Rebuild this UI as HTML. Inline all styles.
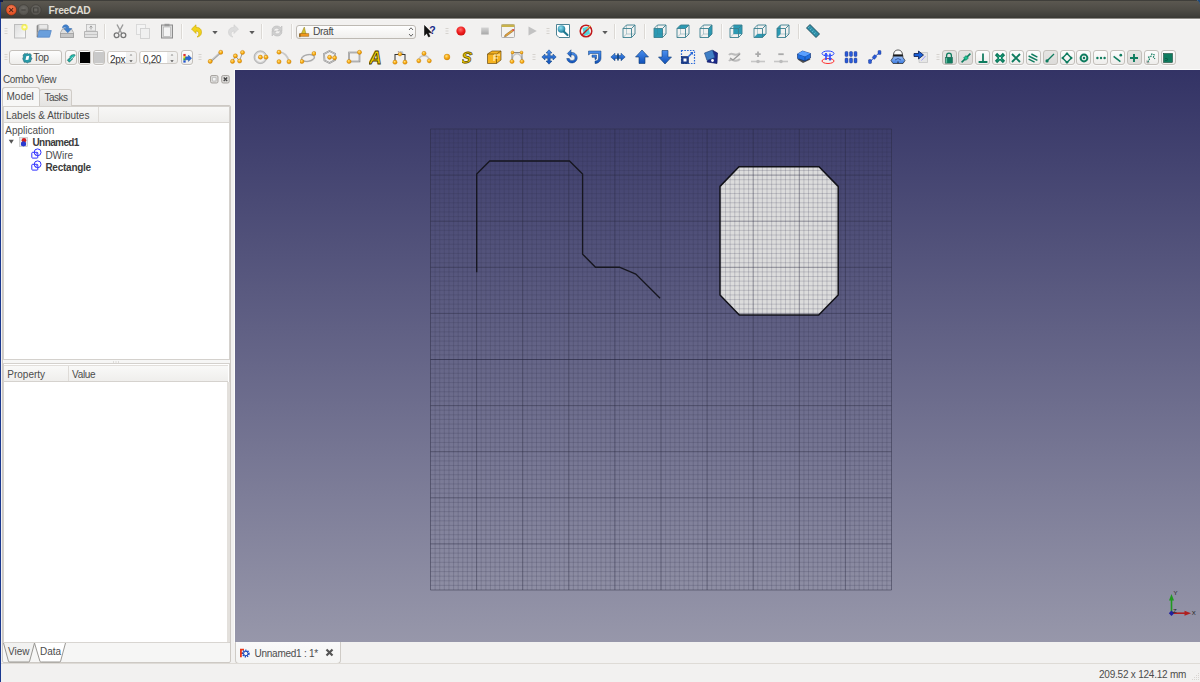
<!DOCTYPE html><html><head><meta charset="utf-8"><style>
html,body{margin:0;padding:0;}
body{width:1200px;height:682px;overflow:hidden;position:relative;background:#f2f1f0;font-family:"Liberation Sans", sans-serif;}
.t{position:absolute;white-space:nowrap;line-height:1;}
</style></head><body>
<div style="position:absolute;left:0px;top:0px;width:1200px;height:18px;background:linear-gradient(#5d5a51 0px,#58554e 3px,#4d4b45 10px,#42413c 15px,#3a3935 18px);border-radius:4px 4px 0 0;"></div>
<div style="position:absolute;left:0px;top:18px;width:1200px;height:1px;background:#8d8b86;"></div>
<div style="position:absolute;left:3px;top:0px;width:1194px;height:1px;background:#3f3e3a;"></div>
<svg style="position:absolute;left:1196px;top:0px" width="4" height="5" viewBox="0 0 4 5"><path d="M0 0H4V5Q3.5 0.5 0 0Z" fill="#1a4a80"/></svg>
<div style="position:absolute;left:0px;top:19px;width:1200px;height:1px;background:#f8f7f6;"></div>
<svg style="position:absolute;left:0;top:0" width="60" height="19"><defs><radialGradient id="cg" cx="50%" cy="35%" r="60%"><stop offset="0" stop-color="#f57d55"/><stop offset="1" stop-color="#de4a1d"/></radialGradient><radialGradient id="gg" cx="50%" cy="35%" r="60%"><stop offset="0" stop-color="#6c6a65"/><stop offset="1" stop-color="#55534e"/></radialGradient></defs><circle cx="11.3" cy="10" r="5.4" fill="url(#cg)" stroke="#3a2a22" stroke-width="0.5"/><path d="M9.3 8.1L13.1 11.9M13.1 8.1L9.3 11.9" stroke="#5a2616" stroke-width="1.1"/><circle cx="23.6" cy="10" r="5.3" fill="url(#gg)" stroke="#3a3935" stroke-width="0.5"/><path d="M21.3 10H25.7" stroke="#3e3d39" stroke-width="1"/><circle cx="35.9" cy="10" r="5.3" fill="url(#gg)" stroke="#3a3935" stroke-width="0.5"/><rect x="33.6" y="7.9" width="4.4" height="4.2" fill="none" stroke="#3e3d39" stroke-width="0.9"/></svg>
<div class="t" style="left:48.5px;top:6.28px;font-size:10.3px;color:#dfdbd2;font-weight:bold;letter-spacing:-0.3px;">FreeCAD</div>
<div style="position:absolute;left:0px;top:2px;width:1px;height:680px;background:#1b3990;"></div>
<div style="position:absolute;left:0px;top:0px;width:3px;height:2px;background:#101c48;"></div>
<svg width="0" height="0" style="position:absolute"><defs><radialGradient id="dotg" cx="40%" cy="35%" r="65%"><stop offset="0" stop-color="#ffe28a"/><stop offset="0.5" stop-color="#fbb21a"/><stop offset="1" stop-color="#e08a00"/></radialGradient><radialGradient id="redg" cx="45%" cy="35%" r="65%"><stop offset="0" stop-color="#ff6a6a"/><stop offset="0.6" stop-color="#ee1c1c"/><stop offset="1" stop-color="#cc1010"/></radialGradient><radialGradient id="blueballg" cx="40%" cy="35%" r="65%"><stop offset="0" stop-color="#8fe0f0"/><stop offset="1" stop-color="#1a7a9a"/></radialGradient><linearGradient id="stopg" x1="0" y1="0" x2="0" y2="1"><stop offset="0" stop-color="#d4d4d4"/><stop offset="1" stop-color="#a8a8a8"/></linearGradient><linearGradient id="pageg" x1="0" y1="0" x2="1" y2="1"><stop offset="0" stop-color="#dcdcdc"/><stop offset="1" stop-color="#fafafa"/></linearGradient><linearGradient id="arrowg" x1="0" y1="0" x2="0" y2="1"><stop offset="0" stop-color="#4a90f0"/><stop offset="1" stop-color="#1050b8"/></linearGradient><linearGradient id="troopg" x1="0" y1="0" x2="0" y2="1"><stop offset="0" stop-color="#a8c8f8"/><stop offset="1" stop-color="#3a7ae0"/></linearGradient></defs></svg>
<svg style="position:absolute;left:-2.5px;top:23.3px" width="16" height="16" viewBox="0 0 16 16"><path d="M6.5 5.5h3M6.5 8h3M6.5 10.5h3" stroke="#d6d3cf" stroke-width="1"/></svg>
<svg style="position:absolute;left:12.5px;top:23.3px" width="16" height="16" viewBox="0 0 16 16"><rect x="1.5" y="1.5" width="11" height="13.5" fill="url(#pageg)" stroke="#bdbdbd" stroke-width="1"/><circle cx="11.5" cy="4.2" r="3.2" fill="#f7f24a" opacity="0.85"/><circle cx="11.5" cy="4.2" r="1.4" fill="#fffbd0"/></svg>
<svg style="position:absolute;left:36.0px;top:23.3px" width="16" height="16" viewBox="0 0 16 16"><path d="M1.5 2H12V9H1.5Z" fill="#bdbdbd" stroke="#9a9a9a" stroke-width="0.7"/><path d="M3 1.5H11.5V6H3Z" fill="#e8e8e8" stroke="#b5b5b5" stroke-width="0.6"/><path d="M1.2 14.2L3.2 7.5H15.3L13.5 14.2Z" fill="#6a9fdc" stroke="#4f83c4" stroke-width="0.7"/><path d="M1.2 2.5V14" stroke="#7a7a7a" stroke-width="1"/></svg>
<svg style="position:absolute;left:59.0px;top:23.3px" width="16" height="16" viewBox="0 0 16 16"><path d="M1.5 9.5L3.5 6H12.5L14.5 9.5V14.5H1.5Z" fill="#dedede" stroke="#a8a8a8" stroke-width="0.9"/><rect x="1.5" y="10.5" width="13" height="4" fill="#c6c6c6" stroke="#9e9e9e" stroke-width="0.8"/><path d="M3.5 5C3.5 1.5 8 0.5 9.8 3.8V5.5H12.8L8.8 9.8L4.8 5.5H7.5C7 4 5 3.8 3.5 5Z" fill="#3f80cc" stroke="#3a6fb0" stroke-width="0.5"/></svg>
<svg style="position:absolute;left:82.5px;top:23.3px" width="16" height="16" viewBox="0 0 16 16"><rect x="3.5" y="1.5" width="9" height="6.5" fill="#ececec" stroke="#b8b8b8" stroke-width="0.8"/><path d="M8 2.8V6.5M6.6 4.5L8 3L9.4 4.5" stroke="#a0a0a0" stroke-width="1" fill="none"/><path d="M1.5 8.5H14.5V14.5H1.5Z" fill="#e2e2e2" stroke="#b0b0b0" stroke-width="0.9"/><path d="M2 11.5H14" stroke="#c5c5c5" stroke-width="1"/></svg>
<div style="position:absolute;left:104px;top:24px;width:1px;height:15px;background:#dcd9d5;"></div>
<div style="position:absolute;left:105px;top:24px;width:1px;height:15px;background:#fbfbfa;"></div>
<svg style="position:absolute;left:112.0px;top:23.3px" width="16" height="16" viewBox="0 0 16 16"><path d="M5 1.5L9.5 10M11 1.5L6.5 10" stroke="#9a9a9a" stroke-width="1.4"/><circle cx="4.6" cy="12.3" r="2.4" fill="none" stroke="#777" stroke-width="1.3"/><circle cx="11.4" cy="12.3" r="2.4" fill="none" stroke="#777" stroke-width="1.3"/></svg>
<svg style="position:absolute;left:135.0px;top:23.3px" width="16" height="16" viewBox="0 0 16 16"><rect x="1.5" y="1.5" width="9" height="10" fill="#f4f4f4" stroke="#d8d8d8" stroke-width="0.9"/><rect x="5.5" y="5.5" width="9" height="10" fill="#f0f0f0" stroke="#d0d0d0" stroke-width="0.9"/></svg>
<svg style="position:absolute;left:158.7px;top:23.3px" width="16" height="16" viewBox="0 0 16 16"><rect x="2.5" y="2" width="11" height="13" fill="#dadada" stroke="#8c8c8c" stroke-width="1"/><rect x="4.5" y="4" width="7" height="9.5" fill="#f4f4f4" stroke="#aaa" stroke-width="0.6"/><rect x="5.5" y="0.8" width="5" height="2.4" fill="#999"/></svg>
<div style="position:absolute;left:181px;top:24px;width:1px;height:15px;background:#dcd9d5;"></div>
<div style="position:absolute;left:182px;top:24px;width:1px;height:15px;background:#fbfbfa;"></div>
<svg style="position:absolute;left:188.5px;top:23.3px" width="16" height="16" viewBox="0 0 16 16"><path d="M2.5 6L7 1.8V4.3C11.5 4.3 13.5 7.5 12 11.5C11.2 13 9.5 14 8 14C10.5 12.5 10.5 8 7 8V10.5Z" fill="#f1d31c" stroke="#c9a400" stroke-width="0.6"/></svg>
<svg style="position:absolute;left:207px;top:23.3px" width="16" height="16" viewBox="0 0 16 16"><path d="M5.3 8h5.4l-2.7 3.2z" fill="#5a5a5a"/></svg>
<svg style="position:absolute;left:225.2px;top:23.3px" width="16" height="16" viewBox="0 0 16 16"><path d="M13.5 6L9 1.8V4.3C4.5 4.3 2.5 7.5 4 11.5C4.8 13 6.5 14 8 14C5.5 12.5 5.5 8 9 8V10.5Z" fill="#dcdcdc" stroke="#cfcfcf" stroke-width="0.6"/></svg>
<svg style="position:absolute;left:243.7px;top:23.3px" width="16" height="16" viewBox="0 0 16 16"><path d="M5.3 8h5.4l-2.7 3.2z" fill="#5a5a5a"/></svg>
<div style="position:absolute;left:261px;top:24px;width:1px;height:15px;background:#dcd9d5;"></div>
<div style="position:absolute;left:262px;top:24px;width:1px;height:15px;background:#fbfbfa;"></div>
<svg style="position:absolute;left:268.7px;top:23.3px" width="16" height="16" viewBox="0 0 16 16"><path d="M3 7.5C3 3 8.5 1.5 11.5 4.5L13 3V8H8.5L10.2 6.3C8.3 4.3 5.2 5 4.8 7.5Z" fill="#cfcfcf" stroke="#b5b5b5" stroke-width="0.5"/><path d="M13 8.5C13 13 7.5 14.5 4.5 11.5L3 13V8H7.5L5.8 9.7C7.7 11.7 10.8 11 11.2 8.5Z" fill="#cfcfcf" stroke="#b5b5b5" stroke-width="0.5"/></svg>
<div style="position:absolute;left:291px;top:24px;width:1px;height:15px;background:#dcd9d5;"></div>
<div style="position:absolute;left:292px;top:24px;width:1px;height:15px;background:#fbfbfa;"></div>
<div style="position:absolute;left:296px;top:24.5px;width:120px;height:14px;box-sizing:border-box;border:1px solid #bdb9b3;border-radius:3px;background:linear-gradient(#fefefe,#f0efed);"></div>
<svg style="position:absolute;left:298.5px;top:24.5px" width="13" height="13" viewBox="0 0 13 13"><g transform="scale(0.8125)"><path d="M2 12.5L6.5 2.5L9 12.5Z" fill="#d8c030" stroke="#7a6a00" stroke-width="0.5"/><path d="M1 10.5H12V14H1Z" fill="#f09820" stroke="#7a4a00" stroke-width="0.5"/><path d="M1 10.5V15" stroke="#7a4a00" stroke-width="1.2"/></g></svg>
<div class="t" style="left:313px;top:27.28px;font-size:10.3px;color:#4a4a4a;font-weight:normal;letter-spacing:-0.4px;">Draft</div>
<svg style="position:absolute;left:407px;top:26px" width="8" height="12" viewBox="0 0 8 12"><path d="M2 4L4 1.8L6 4M2 8L4 10.2L6 8" fill="none" stroke="#555" stroke-width="0.9"/></svg>
<svg style="position:absolute;left:421.7px;top:23.3px" width="16" height="16" viewBox="0 0 16 16"><path d="M2.5 2.5V12.5L4.8 10.3L6.6 14L8 13.3L6.3 9.7H9.5Z" fill="#111" stroke="#000" stroke-width="0.5"/><text x="7.3" y="10.8" font-family="Liberation Sans" font-weight="bold" font-size="10.5" fill="#1a2a8a">?</text></svg>
<svg style="position:absolute;left:438.5px;top:23.3px" width="16" height="16" viewBox="0 0 16 16"><path d="M6.5 5.5h3M6.5 8h3M6.5 10.5h3" stroke="#d6d3cf" stroke-width="1"/></svg>
<svg style="position:absolute;left:453.2px;top:23.3px" width="16" height="16" viewBox="0 0 16 16"><circle cx="8" cy="8" r="4.6" fill="url(#redg)"/></svg>
<svg style="position:absolute;left:477px;top:23.3px" width="16" height="16" viewBox="0 0 16 16"><rect x="4.2" y="4.5" width="7.5" height="7" fill="url(#stopg)"/></svg>
<svg style="position:absolute;left:500px;top:23.3px" width="16" height="16" viewBox="0 0 16 16"><rect x="1.5" y="1.5" width="13" height="13" rx="1" fill="#f4f3f0" stroke="#a9a9a9" stroke-width="0.9"/><rect x="1.5" y="1.5" width="13" height="2.5" fill="#c8b24a"/><path d="M5 12L12.5 6.5L13.8 7.8L6.3 13.3L4.5 13.8Z" fill="#e8a33a" stroke="#7a5a20" stroke-width="0.5"/><circle cx="13.4" cy="6.9" r="1" fill="#e04040"/></svg>
<svg style="position:absolute;left:523.5px;top:23.3px" width="16" height="16" viewBox="0 0 16 16"><path d="M4.5 3.5L12.8 8L4.5 12.5Z" fill="#c2c2c2"/></svg>
<svg style="position:absolute;left:540px;top:23.3px" width="16" height="16" viewBox="0 0 16 16"><path d="M6.5 5.5h3M6.5 8h3M6.5 10.5h3" stroke="#d6d3cf" stroke-width="1"/></svg>
<svg style="position:absolute;left:554.5px;top:23.3px" width="16" height="16" viewBox="0 0 16 16"><path d="M1.5 1.5H14.5V14.5H4L1.5 12Z" fill="#fff" stroke="#4e8394" stroke-width="1"/><circle cx="6.5" cy="6" r="3.8" fill="url(#blueballg)"/><path d="M9 8.8L12.5 12" stroke="#207890" stroke-width="2.2" stroke-linecap="round"/></svg>
<svg style="position:absolute;left:578px;top:23.3px" width="16" height="16" viewBox="0 0 16 16"><path d="M4.5 5L10.5 3.5L12 11L6 13Z" fill="#52d3dc"/><circle cx="8" cy="8" r="5.8" fill="none" stroke="#c0181a" stroke-width="1.5"/><path d="M3.8 12.2L12.2 3.8" stroke="#c0181a" stroke-width="1.4"/><path d="M9 6.5L12.5 2.5" stroke="#f5e050" stroke-width="1"/></svg>
<svg style="position:absolute;left:596.7px;top:23.3px" width="16" height="16" viewBox="0 0 16 16"><path d="M5.3 8h5.4l-2.7 3.2z" fill="#5a5a5a"/></svg>
<div style="position:absolute;left:614px;top:24px;width:1px;height:15px;background:#dcd9d5;"></div>
<div style="position:absolute;left:615px;top:24px;width:1px;height:15px;background:#fbfbfa;"></div>
<svg style="position:absolute;left:621.2px;top:23.3px" width="16" height="16" viewBox="0 0 16 16"><path d="M2 5.5H10.5V14.5H2ZM2 5.5L5.5 2H14L10.5 5.5M14 2V11L10.5 14.5" fill="none" stroke="#3a7f8e" stroke-width="0.9"/><path d="M5.5 2V11H14M5.5 11L2 14.5" fill="none" stroke="#3a7f8e" stroke-width="0.5" opacity="0.7"/></svg>
<div style="position:absolute;left:644px;top:24px;width:1px;height:15px;background:#dcd9d5;"></div>
<div style="position:absolute;left:645px;top:24px;width:1px;height:15px;background:#fbfbfa;"></div>
<svg style="position:absolute;left:651.6px;top:23.3px" width="16" height="16" viewBox="0 0 16 16"><path d="M2 5.5H10.5V14.5H2Z" fill="#2b9ab4"/><path d="M2 5.5H10.5V14.5H2ZM2 5.5L5.5 2H14L10.5 5.5M14 2V11L10.5 14.5" fill="none" stroke="#3a7f8e" stroke-width="0.9"/><path d="M5.5 2V11H14M5.5 11L2 14.5" fill="none" stroke="#3a7f8e" stroke-width="0.5" opacity="0.7"/></svg>
<svg style="position:absolute;left:674.9px;top:23.3px" width="16" height="16" viewBox="0 0 16 16"><path d="M2 5.5L5.5 2H14L10.5 5.5Z" fill="#2b9ab4"/><path d="M2 5.5H10.5V14.5H2ZM2 5.5L5.5 2H14L10.5 5.5M14 2V11L10.5 14.5" fill="none" stroke="#3a7f8e" stroke-width="0.9"/><path d="M5.5 2V11H14M5.5 11L2 14.5" fill="none" stroke="#3a7f8e" stroke-width="0.5" opacity="0.7"/></svg>
<svg style="position:absolute;left:698.0px;top:23.3px" width="16" height="16" viewBox="0 0 16 16"><path d="M10.5 5.5L14 2V11L10.5 14.5Z" fill="#2b9ab4"/><path d="M2 5.5H10.5V14.5H2ZM2 5.5L5.5 2H14L10.5 5.5M14 2V11L10.5 14.5" fill="none" stroke="#3a7f8e" stroke-width="0.9"/><path d="M5.5 2V11H14M5.5 11L2 14.5" fill="none" stroke="#3a7f8e" stroke-width="0.5" opacity="0.7"/></svg>
<div style="position:absolute;left:721px;top:24px;width:1px;height:15px;background:#dcd9d5;"></div>
<div style="position:absolute;left:722px;top:24px;width:1px;height:15px;background:#fbfbfa;"></div>
<svg style="position:absolute;left:728.0px;top:23.3px" width="16" height="16" viewBox="0 0 16 16"><path d="M5.5 2H14V11H5.5Z" fill="#2b9ab4"/><path d="M2 5.5H10.5V14.5H2ZM2 5.5L5.5 2H14L10.5 5.5M14 2V11L10.5 14.5" fill="none" stroke="#3a7f8e" stroke-width="0.9"/><path d="M5.5 2V11H14M5.5 11L2 14.5" fill="none" stroke="#3a7f8e" stroke-width="0.5" opacity="0.7"/></svg>
<svg style="position:absolute;left:751.6px;top:23.3px" width="16" height="16" viewBox="0 0 16 16"><path d="M2 14.5L5.5 11H14L10.5 14.5Z" fill="#2b9ab4"/><path d="M2 5.5H10.5V14.5H2ZM2 5.5L5.5 2H14L10.5 5.5M14 2V11L10.5 14.5" fill="none" stroke="#3a7f8e" stroke-width="0.9"/><path d="M5.5 2V11H14M5.5 11L2 14.5" fill="none" stroke="#3a7f8e" stroke-width="0.5" opacity="0.7"/></svg>
<svg style="position:absolute;left:774.9px;top:23.3px" width="16" height="16" viewBox="0 0 16 16"><path d="M2 5.5L5.5 2V11L2 14.5Z" fill="#2b9ab4"/><path d="M2 5.5H10.5V14.5H2ZM2 5.5L5.5 2H14L10.5 5.5M14 2V11L10.5 14.5" fill="none" stroke="#3a7f8e" stroke-width="0.9"/><path d="M5.5 2V11H14M5.5 11L2 14.5" fill="none" stroke="#3a7f8e" stroke-width="0.5" opacity="0.7"/></svg>
<div style="position:absolute;left:798px;top:24px;width:1px;height:15px;background:#dcd9d5;"></div>
<div style="position:absolute;left:799px;top:24px;width:1px;height:15px;background:#fbfbfa;"></div>
<svg style="position:absolute;left:805.3px;top:23.3px" width="16" height="16" viewBox="0 0 16 16"><path d="M1.5 5L5 1.5L14.5 11L11 14.5Z" fill="#2f8fa8" stroke="#1d4a58" stroke-width="0.9"/><path d="M3 5L4.5 3.5M5 7L6.5 5.5M7 9L8.5 7.5M9 11L10.5 9.5" stroke="#7fd0e0" stroke-width="0.6"/></svg>
<svg style="position:absolute;left:-2.5px;top:49.3px" width="16" height="16" viewBox="0 0 16 16"><path d="M6.5 5.5h3M6.5 8h3M6.5 10.5h3" stroke="#d6d3cf" stroke-width="1"/></svg>
<div style="position:absolute;left:9px;top:50px;width:53px;height:15px;box-sizing:border-box;border:1px solid #c4c0bb;border-radius:3px;background:linear-gradient(#fdfdfd,#eeedeb);box-shadow:0 1px 0 rgba(255,255,255,0.7);"></div>
<svg style="position:absolute;left:18.5px;top:49.5px" width="16" height="16" viewBox="0 0 16 16"><g transform="translate(2.6 2.2) scale(0.72)"><path d="M4.5 1.5L6 2.5L8 1.5L9.5 2.5L12 2L13.5 4L13 6.5L14.5 9L13 11L12.5 13.5L10 14L8 15L6 14L3.5 14L2.5 11.5L1.5 9L2.5 6.5L2 4Z" fill="#2a9aa8" stroke="#1a5a66" stroke-width="0.7"/><path d="M6.5 5.5L10.5 5L9.5 10.5L5.5 11Z" fill="#fff"/></g></svg>
<div class="t" style="left:33.3px;top:53.28px;font-size:10.3px;color:#4a4a4a;font-weight:normal;letter-spacing:-0.5px;">Top</div>
<div style="position:absolute;left:64.5px;top:50px;width:12px;height:15px;box-sizing:border-box;border:1px solid #c4c0bb;border-radius:3px;background:linear-gradient(#fdfdfd,#eeedeb);box-shadow:0 1px 0 rgba(255,255,255,0.7);"></div>
<svg style="position:absolute;left:62.5px;top:49.5px" width="16" height="16" viewBox="0 0 16 16"><g transform="translate(2.5 2.5) scale(0.7)"><path d="M2.5 11L7 6.5L10 9.5L5.5 14Z" fill="#1aa39a" stroke="#0a4a44" stroke-width="0.6"/><path d="M6 6C8 3 12 2 14 3.5C12 6.5 10 9 8 9.5" fill="#22b8aa" stroke="#0a4a44" stroke-width="0.6"/><path d="M6.5 11L11 6" stroke="#fff" stroke-width="0.8"/></g></svg>
<div style="position:absolute;left:78.3px;top:50px;width:12.5px;height:15px;box-sizing:border-box;border:1px solid #c4c0bb;border-radius:3px;background:linear-gradient(#fdfdfd,#eeedeb);box-shadow:0 1px 0 rgba(255,255,255,0.7);"></div>
<div style="position:absolute;left:79.8px;top:52.3px;width:10px;height:10.4px;background:#000;"></div>
<div style="position:absolute;left:92.5px;top:50px;width:12.3px;height:15px;box-sizing:border-box;border:1px solid #c4c0bb;border-radius:3px;background:linear-gradient(#fdfdfd,#eeedeb);box-shadow:0 1px 0 rgba(255,255,255,0.7);"></div>
<div style="position:absolute;left:94px;top:52.3px;width:9.5px;height:10.4px;background:#c9c9c9;"></div>
<div style="position:absolute;left:107px;top:51px;width:29.7px;height:12.8px;box-sizing:border-box;border:1px solid #cfcbc6;border-radius:3px;background:linear-gradient(#f3f3f2,#ebeae8);"></div>
<div style="position:absolute;left:108.5px;top:52px;width:17.2px;height:10.8px;background:#fff;"></div>
<svg style="position:absolute;left:127.69999999999999px;top:51px" width="6" height="12.8" viewBox="0 0 6 12.8"><path d="M1.6 4.6H4.4L3 2.9Z" fill="#8a8a8a"/><path d="M1.3 9.3H4.7L3 11.2Z" fill="#555"/></svg>
<div class="t" style="left:110px;top:54.84px;font-size:10px;color:#333;font-weight:normal;letter-spacing:-0.35px;">2px</div>
<div style="position:absolute;left:139.3px;top:51px;width:39px;height:12.8px;box-sizing:border-box;border:1px solid #cfcbc6;border-radius:3px;background:linear-gradient(#f3f3f2,#ebeae8);"></div>
<div style="position:absolute;left:140.8px;top:52px;width:26.5px;height:10.8px;background:#fff;"></div>
<svg style="position:absolute;left:169.3px;top:51px" width="6" height="12.8" viewBox="0 0 6 12.8"><path d="M1.6 4.6H4.4L3 2.9Z" fill="#8a8a8a"/><path d="M1.3 9.3H4.7L3 11.2Z" fill="#555"/></svg>
<div class="t" style="left:143px;top:54.84px;font-size:10px;color:#333;font-weight:normal;letter-spacing:-0.35px;">0,20</div>
<div style="position:absolute;left:181.3px;top:50px;width:12.2px;height:15px;box-sizing:border-box;border:1px solid #c4c0bb;border-radius:3px;background:linear-gradient(#fdfdfd,#eeedeb);box-shadow:0 1px 0 rgba(255,255,255,0.7);"></div>
<svg style="position:absolute;left:179.4px;top:49.5px" width="16" height="16" viewBox="0 0 16 16"><g transform="translate(2.2 2.5) scale(0.72)"><rect x="3" y="2" width="3.2" height="3" fill="#e03030"/><rect x="3" y="5" width="3.2" height="3" fill="#f0d020"/><rect x="3" y="8" width="3.2" height="3" fill="#30b030"/><rect x="3" y="11" width="3.2" height="3" fill="#2050d0"/><path d="M6 6H10V3.5L14.5 8L10 12.5V10H6Z" fill="#2a6ad8" stroke="#0e3a80" stroke-width="0.5"/></g></svg>
<svg style="position:absolute;left:192px;top:49.3px" width="16" height="16" viewBox="0 0 16 16"><path d="M6.5 5.5h3M6.5 8h3M6.5 10.5h3" stroke="#d6d3cf" stroke-width="1"/></svg>
<svg style="position:absolute;left:206.6px;top:49.3px" width="16" height="16" viewBox="0 0 16 16"><path d="M3.5 12.5L13.5 3.5" stroke="#c4c4c4" stroke-width="2.2"/><path d="M3.5 13.2L13.5 4.2" stroke="#8a8a8a" stroke-width="0.6"/><circle cx="3.2" cy="12.4" r="2.1" fill="url(#dotg)" stroke="#c07800" stroke-width="0.4"/><circle cx="13.8" cy="3.3" r="2.1" fill="url(#dotg)" stroke="#c07800" stroke-width="0.4"/></svg>
<svg style="position:absolute;left:229.5px;top:49.3px" width="16" height="16" viewBox="0 0 16 16"><path d="M2.5 12.5L5.5 7L9.5 12L12.5 3.5" stroke="#999" stroke-width="1" fill="none"/><circle cx="2.5" cy="12.4" r="2.1" fill="url(#dotg)" stroke="#c07800" stroke-width="0.4"/><circle cx="5.4" cy="6.9" r="2.1" fill="url(#dotg)" stroke="#c07800" stroke-width="0.4"/><circle cx="9.6" cy="12" r="2.1" fill="url(#dotg)" stroke="#c07800" stroke-width="0.4"/><circle cx="12.5" cy="3.5" r="2.1" fill="url(#dotg)" stroke="#c07800" stroke-width="0.4"/></svg>
<svg style="position:absolute;left:252.9px;top:49.3px" width="16" height="16" viewBox="0 0 16 16"><circle cx="7.4" cy="8.2" r="5.6" fill="none" stroke="#d0d0d0" stroke-width="1.8"/><circle cx="7.4" cy="8.2" r="6.4" fill="none" stroke="#8f8f8f" stroke-width="0.5"/><circle cx="7.4" cy="8.2" r="2.1" fill="url(#dotg)" stroke="#c07800" stroke-width="0.4"/><circle cx="13" cy="8.2" r="2.1" fill="url(#dotg)" stroke="#c07800" stroke-width="0.4"/></svg>
<svg style="position:absolute;left:276.2px;top:49.3px" width="16" height="16" viewBox="0 0 16 16"><path d="M3 3.2C8 3 12 7 13 12.7" stroke="#c9c9c9" stroke-width="1.8" fill="none"/><circle cx="3" cy="3.2" r="2.1" fill="url(#dotg)" stroke="#c07800" stroke-width="0.4"/><circle cx="3" cy="12.7" r="2.1" fill="url(#dotg)" stroke="#c07800" stroke-width="0.4"/><circle cx="13" cy="12.7" r="2.1" fill="url(#dotg)" stroke="#c07800" stroke-width="0.4"/></svg>
<svg style="position:absolute;left:299.6px;top:49.3px" width="16" height="16" viewBox="0 0 16 16"><ellipse cx="8" cy="9" rx="6.5" ry="3.3" fill="none" stroke="#c4c4c4" stroke-width="1.6" transform="rotate(-10 8 9)"/><ellipse cx="8" cy="9" rx="6.5" ry="3.3" fill="none" stroke="#8a8a8a" stroke-width="0.5" transform="rotate(-10 8 9)"/><circle cx="1.9" cy="12.5" r="2.1" fill="url(#dotg)" stroke="#c07800" stroke-width="0.4"/><circle cx="14" cy="4.5" r="2.1" fill="url(#dotg)" stroke="#c07800" stroke-width="0.4"/></svg>
<svg style="position:absolute;left:322.4px;top:49.3px" width="16" height="16" viewBox="0 0 16 16"><path d="M7.5 2L13 4.8L13 11L7.5 14L2.5 11.5L2 5Z" fill="none" stroke="#8f8f8f" stroke-width="1.8"/><path d="M7.5 2L13 4.8L13 11L7.5 14L2.5 11.5L2 5Z" fill="none" stroke="#cfcfcf" stroke-width="0.8"/><circle cx="7.6" cy="8.3" r="2.1" fill="url(#dotg)" stroke="#c07800" stroke-width="0.4"/><circle cx="12.6" cy="8.8" r="2.1" fill="url(#dotg)" stroke="#c07800" stroke-width="0.4"/></svg>
<svg style="position:absolute;left:346.0px;top:49.3px" width="16" height="16" viewBox="0 0 16 16"><rect x="3" y="3.5" width="10.5" height="9" fill="none" stroke="#8a8a8a" stroke-width="1.6"/><rect x="3" y="3.5" width="10.5" height="9" fill="none" stroke="#d8d8d8" stroke-width="0.5"/><circle cx="3" cy="12.5" r="2.1" fill="url(#dotg)" stroke="#c07800" stroke-width="0.4"/><circle cx="13.5" cy="3.3" r="2.1" fill="url(#dotg)" stroke="#c07800" stroke-width="0.4"/></svg>
<svg style="position:absolute;left:369.1px;top:49.3px" width="16" height="16" viewBox="0 0 16 16"><text x="0" y="15" font-family="Liberation Sans" font-weight="bold" font-style="italic" font-size="17.5" fill="#f5d200" stroke="#4a3a00" stroke-width="0.8">A</text></svg>
<svg style="position:absolute;left:392.4px;top:49.3px" width="16" height="16" viewBox="0 0 16 16"><path d="M3 5V13M13 5V13M3 5.5H13" stroke="#333" stroke-width="1" fill="none"/><text x="5.5" y="4.5" font-family="Liberation Sans" font-size="4" fill="#555">1%</text><circle cx="3" cy="13.2" r="2.1" fill="url(#dotg)" stroke="#c07800" stroke-width="0.4"/><circle cx="13" cy="13.2" r="2.1" fill="url(#dotg)" stroke="#c07800" stroke-width="0.4"/><circle cx="8" cy="5.2" r="1.8" fill="url(#dotg)" stroke="#c07800" stroke-width="0.4"/></svg>
<svg style="position:absolute;left:415.8px;top:49.3px" width="16" height="16" viewBox="0 0 16 16"><path d="M2.8 11.8C3 5 13 5 13.3 11.8" stroke="#c8c8c8" stroke-width="1.8" fill="none"/><circle cx="2.8" cy="11.8" r="2.1" fill="url(#dotg)" stroke="#c07800" stroke-width="0.4"/><circle cx="13.3" cy="11.8" r="2.1" fill="url(#dotg)" stroke="#c07800" stroke-width="0.4"/><circle cx="8" cy="4.4" r="2.1" fill="url(#dotg)" stroke="#c07800" stroke-width="0.4"/></svg>
<svg style="position:absolute;left:438.7px;top:49.3px" width="16" height="16" viewBox="0 0 16 16"><circle cx="8" cy="8" r="2.9" fill="url(#dotg)" stroke="#c07800" stroke-width="0.4"/></svg>
<svg style="position:absolute;left:461.6px;top:49.3px" width="16" height="16" viewBox="0 0 16 16"><text x="0.5" y="14" font-family="Liberation Sans" font-weight="bold" font-style="italic" font-size="16" fill="#ecc800" stroke="#5a4a00" stroke-width="0.7" transform="skewX(-8)" >S</text></svg>
<svg style="position:absolute;left:485.8px;top:49.3px" width="16" height="16" viewBox="0 0 16 16"><path d="M1.5 5L6 2H15V11L10.5 14.5H1.5Z" fill="#f6b320" stroke="#6a4a10" stroke-width="0.7"/><path d="M1.5 5H10.5V14.5M10.5 5L15 2" fill="none" stroke="#6a4a10" stroke-width="0.7"/><path d="M8 6H14M8 6V12M8 9H12" stroke="#fff0c0" stroke-width="1.2"/></svg>
<svg style="position:absolute;left:509.1px;top:49.3px" width="16" height="16" viewBox="0 0 16 16"><path d="M3 12.5C3 2 13 2 13 12.5" stroke="#c8c8c8" stroke-width="1.6" fill="none"/><path d="M3 12.5V3.5H13V12.5" stroke="#444" stroke-width="0.6" fill="none"/><circle cx="3" cy="12.5" r="2.1" fill="url(#dotg)" stroke="#c07800" stroke-width="0.4"/><circle cx="13" cy="12.5" r="2.1" fill="url(#dotg)" stroke="#c07800" stroke-width="0.4"/><circle cx="3.5" cy="3.5" r="1.5" fill="url(#dotg)" stroke="#c07800" stroke-width="0.4"/><circle cx="12.5" cy="3.5" r="1.5" fill="url(#dotg)" stroke="#c07800" stroke-width="0.4"/></svg>
<svg style="position:absolute;left:525.5px;top:49.3px" width="16" height="16" viewBox="0 0 16 16"><path d="M6.5 5.5h3M6.5 8h3M6.5 10.5h3" stroke="#d6d3cf" stroke-width="1"/></svg>
<svg style="position:absolute;left:540.8px;top:49.3px" width="16" height="16" viewBox="0 0 16 16"><path d="M8 0.8L11 4H9.2V6.8H12V5L15.2 8L12 11V9.2H9.2V12H11L8 15.2L5 12H6.8V9.2H4V11L0.8 8L4 5V6.8H6.8V4H5Z" fill="url(#arrowg)" stroke="#10407a" stroke-width="0.5"/></svg>
<svg style="position:absolute;left:563.6px;top:49.3px" width="16" height="16" viewBox="0 0 16 16"><path d="M7 3.5A5.3 5.3 0 1 1 2.7 9.5H5.3A2.9 2.9 0 1 0 7 6Z" fill="url(#arrowg)" stroke="#10407a" stroke-width="0.5"/><path d="M7 0.8L7 8.3L3.3 4.5Z" fill="url(#arrowg)" stroke="#10407a" stroke-width="0.5"/></svg>
<svg style="position:absolute;left:587.0px;top:49.3px" width="16" height="16" viewBox="0 0 16 16"><path d="M1.5 2H14V9C14 12.5 11 14.5 8 14.5V12C10 12 11.5 11 11.5 9V4.5H3.5L1.5 6Z" fill="url(#arrowg)" stroke="#10407a" stroke-width="0.5"/><path d="M5 6H9.5V9C9.5 10 9 10.5 8 10.5V8.3H5Z" fill="url(#arrowg)" stroke="#10407a" stroke-width="0.5"/></svg>
<svg style="position:absolute;left:609.9px;top:49.3px" width="16" height="16" viewBox="0 0 16 16"><path d="M0.8 8L5 4.2V6.6H11V4.2L15.2 8L11 11.8V9.4H5V11.8Z" fill="url(#arrowg)" stroke="#10407a" stroke-width="0.5"/><path d="M8 4.5V11.5" stroke="#10407a" stroke-width="1.6"/></svg>
<svg style="position:absolute;left:633.6px;top:49.3px" width="16" height="16" viewBox="0 0 16 16"><path d="M8 1L14.5 8H11V14.5H5V8H1.5Z" fill="url(#arrowg)" stroke="#0e3a70" stroke-width="0.6"/></svg>
<svg style="position:absolute;left:657.0px;top:49.3px" width="16" height="16" viewBox="0 0 16 16"><path d="M8 15L14.5 8H11V1.5H5V8H1.5Z" fill="url(#arrowg)" stroke="#0e3a70" stroke-width="0.6"/></svg>
<svg style="position:absolute;left:679.9px;top:49.3px" width="16" height="16" viewBox="0 0 16 16"><rect x="1.5" y="1.5" width="13" height="13" fill="none" stroke="#2a6ad8" stroke-width="1.2" stroke-dasharray="1.6 1.2"/><rect x="1.5" y="7.5" width="7" height="7" fill="#1b3c8c" stroke="#0e2a6a" stroke-width="0.6"/><rect x="3.5" y="9.5" width="3" height="3" fill="#fff"/><path d="M8 8L12.5 3.5" stroke="#2a6ad8" stroke-width="1.4"/><path d="M10 3H13V6Z" fill="#2a6ad8"/></svg>
<svg style="position:absolute;left:703.2px;top:49.3px" width="16" height="16" viewBox="0 0 16 16"><path d="M4 13L10 1.5L14.5 4L14 14.5Z" fill="#1c2a8a" stroke="#05105a" stroke-width="0.6"/><path d="M1.5 4L9.5 1L12 8.5L4 11.5Z" fill="#3f7fc6" stroke="#1a3f7a" stroke-width="0.6"/><circle cx="9.5" cy="11.5" r="1.4" fill="#fff"/></svg>
<svg style="position:absolute;left:726.6px;top:49.3px" width="16" height="16" viewBox="0 0 16 16"><path d="M2 6C5 2 8 9 13 4M2 12C5 8 8 15 13 10" stroke="#bdbdbd" stroke-width="2" fill="none"/><path d="M3 9L6 11L13 5" stroke="#9a9a9a" stroke-width="1.3" fill="none"/></svg>
<svg style="position:absolute;left:749.9px;top:49.3px" width="16" height="16" viewBox="0 0 16 16"><path d="M1 12.5H15" stroke="#c6c6c6" stroke-width="1.6"/><circle cx="8" cy="12.5" r="1.8" fill="#bbb"/><path d="M8 2.5V8M5.3 5.2H10.7" stroke="#aaa" stroke-width="1.8"/></svg>
<svg style="position:absolute;left:773.2px;top:49.3px" width="16" height="16" viewBox="0 0 16 16"><path d="M1 12.5H15" stroke="#c6c6c6" stroke-width="1.6"/><circle cx="8" cy="12.5" r="1.8" fill="#bbb"/><path d="M5.3 5.2H10.7" stroke="#aaa" stroke-width="1.8"/></svg>
<svg style="position:absolute;left:796.2px;top:49.3px" width="16" height="16" viewBox="0 0 16 16"><path d="M1.5 10.5L7 14L14.5 10.5L9 7Z" fill="#333" opacity="0.85"/><path d="M1.5 5L6.5 2L14.5 4.5V9L9 12L1.5 9.5Z" fill="#1f6fe0" stroke="#0a2a6a" stroke-width="0.6"/><path d="M1.5 5L9 7.5L14.5 4.5M9 7.5V12" fill="none" stroke="#0a2a6a" stroke-width="0.5"/><path d="M1.5 5L6.5 2L14.5 4.5L9 7.5Z" fill="#5aa0ff"/></svg>
<svg style="position:absolute;left:819.5px;top:49.3px" width="16" height="16" viewBox="0 0 16 16"><ellipse cx="8" cy="4.5" rx="6" ry="2.5" fill="none" stroke="#2a4aff" stroke-width="1"/><ellipse cx="8" cy="12" rx="6" ry="2.5" fill="none" stroke="#ff3030" stroke-width="1"/><path d="M6 4.5V11M10 4.5V11" stroke="#2a4aff" stroke-width="1.6"/><path d="M4.5 6.5L6 4L7.5 6.5M8.5 9L10 11.5L11.5 9" stroke="#2a4aff" stroke-width="1" fill="none"/></svg>
<svg style="position:absolute;left:842.9px;top:49.3px" width="16" height="16" viewBox="0 0 16 16"><rect x="2" y="2.5" width="3" height="5" rx="1" fill="#2a5ad8" stroke="#15307a" stroke-width="0.4"/><rect x="2" y="9" width="3" height="5" rx="1" fill="#2a5ad8" stroke="#15307a" stroke-width="0.4"/><rect x="6.5" y="2.5" width="3" height="5" rx="1" fill="#2a5ad8" stroke="#15307a" stroke-width="0.4"/><rect x="6.5" y="9" width="3" height="5" rx="1" fill="#2a5ad8" stroke="#15307a" stroke-width="0.4"/><rect x="11" y="2.5" width="3" height="5" rx="1" fill="#2a5ad8" stroke="#15307a" stroke-width="0.4"/><rect x="11" y="9" width="3" height="5" rx="1" fill="#2a5ad8" stroke="#15307a" stroke-width="0.4"/></svg>
<svg style="position:absolute;left:866.6px;top:49.3px" width="16" height="16" viewBox="0 0 16 16"><path d="M3 13L7.5 8L12 4" stroke="#2a5ad8" stroke-width="1" fill="none"/><rect x="1.5" y="10.5" width="3" height="4" rx="0.8" fill="#2a5ad8" stroke="#15307a" stroke-width="0.4"/><rect x="6" y="6" width="3" height="4" rx="0.8" fill="#2a5ad8" stroke="#15307a" stroke-width="0.4" transform="rotate(40 7.5 8)"/><rect x="11" y="1.5" width="3" height="4" rx="0.8" fill="#2a5ad8" stroke="#15307a" stroke-width="0.4"/></svg>
<svg style="position:absolute;left:889.9px;top:49.3px" width="16" height="16" viewBox="0 0 16 16"><path d="M3.5 6.5C3.5 2.5 5.5 1 8 1C10.5 1 12.5 2.5 12.5 6.5Z" fill="#fafafa" stroke="#333" stroke-width="0.8"/><path d="M3.3 6.2H12.7L13 8.5L15 11.5L13 14.5H3L1 11.5L3 8.5Z" fill="url(#troopg)" stroke="#222" stroke-width="0.7"/><path d="M3.3 5.5H12.7V7.5H3.3Z" fill="#1a1a1a"/><path d="M5 11L8 9.5L11 11" fill="none" stroke="#2a4a90" stroke-width="0.8"/><path d="M7.5 12.5h1v2h-1z" fill="#222"/></svg>
<svg style="position:absolute;left:912.8px;top:49.3px" width="16" height="16" viewBox="0 0 16 16"><path d="M6 3.5H14.5V13.5H6Z" fill="#e6e6e6" stroke="#c0c0c0" stroke-width="0.7"/><path d="M8.5 11.5L12.5 7" stroke="#8a8aff" stroke-width="0.8"/><path d="M1 4.5H5.5V2L10.5 6L5.5 10V7.5H1Z" fill="#1c60d8" stroke="#0b1a4a" stroke-width="0.8"/></svg>
<svg style="position:absolute;left:929.5px;top:49.3px" width="16" height="16" viewBox="0 0 16 16"><path d="M6.5 5.5h3M6.5 8h3M6.5 10.5h3" stroke="#d6d3cf" stroke-width="1"/></svg>
<div style="position:absolute;left:941.5px;top:50px;width:15px;height:15px;box-sizing:border-box;border:1px solid #c4c0bb;border-radius:3px;background:linear-gradient(#e6e5e3,#dcdbd9);box-shadow:0 1px 0 rgba(255,255,255,0.7);"></div>
<svg style="position:absolute;left:941.0px;top:49.5px" width="16" height="16" viewBox="0 0 16 16"><g transform="translate(1.6 1.6) scale(0.8)"><path d="M5 7V5A3 3 0 0 1 11 5V7" fill="none" stroke="#0f7c5f" stroke-width="1.6"/><rect x="3.5" y="7" width="9" height="7.5" fill="#0f7c5f" stroke="#0a4a38" stroke-width="0.4"/><path d="M5 8V14" stroke="#80d8b8" stroke-width="1"/></g></svg>
<div style="position:absolute;left:958.4px;top:50px;width:15px;height:15px;box-sizing:border-box;border:1px solid #c4c0bb;border-radius:3px;background:linear-gradient(#e6e5e3,#dcdbd9);box-shadow:0 1px 0 rgba(255,255,255,0.7);"></div>
<svg style="position:absolute;left:957.9px;top:49.5px" width="16" height="16" viewBox="0 0 16 16"><g transform="translate(1.6 1.6) scale(0.8)"><path d="M2.5 13.5L13.5 2.5" stroke="#0f7c5f" stroke-width="2"/><path d="M8 5L11 8L8 11L5 8Z" fill="#1ec090" stroke="#0f7c5f" stroke-width="0.8"/></g></svg>
<div style="position:absolute;left:975.2px;top:50px;width:15px;height:15px;box-sizing:border-box;border:1px solid #c4c0bb;border-radius:3px;background:linear-gradient(#fdfdfd,#eeedeb);box-shadow:0 1px 0 rgba(255,255,255,0.7);"></div>
<svg style="position:absolute;left:974.7px;top:49.5px" width="16" height="16" viewBox="0 0 16 16"><g transform="translate(1.6 1.6) scale(0.8)"><path d="M8 2.5V12.5M2.5 13H13.5" stroke="#0f7c5f" stroke-width="2.2"/></g></svg>
<div style="position:absolute;left:992.0px;top:50px;width:15px;height:15px;box-sizing:border-box;border:1px solid #c4c0bb;border-radius:3px;background:linear-gradient(#fdfdfd,#eeedeb);box-shadow:0 1px 0 rgba(255,255,255,0.7);"></div>
<svg style="position:absolute;left:991.5px;top:49.5px" width="16" height="16" viewBox="0 0 16 16"><g transform="translate(1.6 1.6) scale(0.8)"><path d="M3 3L13 13M13 3L3 13" stroke="#0f7c5f" stroke-width="4"/><path d="M5 5L11 11M11 5L5 11" stroke="#1ec090" stroke-width="1"/><circle cx="8" cy="8" r="1.3" fill="#fff"/></g></svg>
<div style="position:absolute;left:1008.9px;top:50px;width:15px;height:15px;box-sizing:border-box;border:1px solid #c4c0bb;border-radius:3px;background:linear-gradient(#fdfdfd,#eeedeb);box-shadow:0 1px 0 rgba(255,255,255,0.7);"></div>
<svg style="position:absolute;left:1008.4px;top:49.5px" width="16" height="16" viewBox="0 0 16 16"><g transform="translate(1.6 1.6) scale(0.8)"><path d="M3 3L13 13M13 3L3 13" stroke="#0f7c5f" stroke-width="2.4"/></g></svg>
<div style="position:absolute;left:1025.8px;top:50px;width:15px;height:15px;box-sizing:border-box;border:1px solid #c4c0bb;border-radius:3px;background:linear-gradient(#fdfdfd,#eeedeb);box-shadow:0 1px 0 rgba(255,255,255,0.7);"></div>
<svg style="position:absolute;left:1025.2px;top:49.5px" width="16" height="16" viewBox="0 0 16 16"><g transform="translate(1.6 1.6) scale(0.8)"><path d="M2.5 5.5L13.5 11M2.5 9.5L10 13.2M6 3L13.5 6.8" stroke="#0f7c5f" stroke-width="1.8"/></g></svg>
<div style="position:absolute;left:1042.6px;top:50px;width:15px;height:15px;box-sizing:border-box;border:1px solid #c4c0bb;border-radius:3px;background:linear-gradient(#e6e5e3,#dcdbd9);box-shadow:0 1px 0 rgba(255,255,255,0.7);"></div>
<svg style="position:absolute;left:1042.1px;top:49.5px" width="16" height="16" viewBox="0 0 16 16"><g transform="translate(1.6 1.6) scale(0.8)"><path d="M4.5 11.5L13 3" stroke="#0f7c5f" stroke-width="1.6"/><circle cx="4.3" cy="11.7" r="2" fill="#0f7c5f"/></g></svg>
<div style="position:absolute;left:1059.5px;top:50px;width:15px;height:15px;box-sizing:border-box;border:1px solid #c4c0bb;border-radius:3px;background:linear-gradient(#fdfdfd,#eeedeb);box-shadow:0 1px 0 rgba(255,255,255,0.7);"></div>
<svg style="position:absolute;left:1059.0px;top:49.5px" width="16" height="16" viewBox="0 0 16 16"><g transform="translate(1.6 1.6) scale(0.8)"><path d="M8 2.5L13.5 8L8 13.5L2.5 8Z" fill="none" stroke="#0f7c5f" stroke-width="1.8"/><circle cx="8" cy="2.8" r="1.6" fill="#0f7c5f"/><circle cx="13.2" cy="8" r="1.6" fill="#0f7c5f"/><circle cx="8" cy="13.2" r="1.6" fill="#0f7c5f"/><circle cx="2.8" cy="8" r="1.6" fill="#0f7c5f"/></g></svg>
<div style="position:absolute;left:1076.3px;top:50px;width:15px;height:15px;box-sizing:border-box;border:1px solid #c4c0bb;border-radius:3px;background:linear-gradient(#fdfdfd,#eeedeb);box-shadow:0 1px 0 rgba(255,255,255,0.7);"></div>
<svg style="position:absolute;left:1075.8px;top:49.5px" width="16" height="16" viewBox="0 0 16 16"><g transform="translate(1.6 1.6) scale(0.8)"><circle cx="8" cy="8" r="5.5" fill="#0f7c5f"/><circle cx="8" cy="8" r="3" fill="#f0f0f0"/><circle cx="8" cy="8" r="1.5" fill="#0f7c5f"/></g></svg>
<div style="position:absolute;left:1093.2px;top:50px;width:15px;height:15px;box-sizing:border-box;border:1px solid #c4c0bb;border-radius:3px;background:linear-gradient(#fdfdfd,#eeedeb);box-shadow:0 1px 0 rgba(255,255,255,0.7);"></div>
<svg style="position:absolute;left:1092.7px;top:49.5px" width="16" height="16" viewBox="0 0 16 16"><g transform="translate(1.6 1.6) scale(0.8)"><circle cx="3.5" cy="8" r="1.5" fill="#0f7c5f"/><circle cx="8" cy="8" r="1.5" fill="#0f7c5f"/><circle cx="12.5" cy="8" r="1.5" fill="#0f7c5f"/></g></svg>
<div style="position:absolute;left:1110.0px;top:50px;width:15px;height:15px;box-sizing:border-box;border:1px solid #c4c0bb;border-radius:3px;background:linear-gradient(#fdfdfd,#eeedeb);box-shadow:0 1px 0 rgba(255,255,255,0.7);"></div>
<svg style="position:absolute;left:1109.5px;top:49.5px" width="16" height="16" viewBox="0 0 16 16"><g transform="translate(1.6 1.6) scale(0.8)"><path d="M2.5 6L11 12.5" stroke="#0f7c5f" stroke-width="2"/><circle cx="11.5" cy="4.5" r="1.7" fill="#0f7c5f"/></g></svg>
<div style="position:absolute;left:1126.8px;top:50px;width:15px;height:15px;box-sizing:border-box;border:1px solid #c4c0bb;border-radius:3px;background:linear-gradient(#e6e5e3,#dcdbd9);box-shadow:0 1px 0 rgba(255,255,255,0.7);"></div>
<svg style="position:absolute;left:1126.3px;top:49.5px" width="16" height="16" viewBox="0 0 16 16"><g transform="translate(1.6 1.6) scale(0.8)"><path d="M8 3V13M3 8H13" stroke="#0f7c5f" stroke-width="2.4"/></g></svg>
<div style="position:absolute;left:1143.7px;top:50px;width:15px;height:15px;box-sizing:border-box;border:1px solid #c4c0bb;border-radius:3px;background:linear-gradient(#fdfdfd,#eeedeb);box-shadow:0 1px 0 rgba(255,255,255,0.7);"></div>
<svg style="position:absolute;left:1143.2px;top:49.5px" width="16" height="16" viewBox="0 0 16 16"><g transform="translate(1.6 1.6) scale(0.8)"><path d="M4 13L6 10L5 7L8 6L9 3L12 4L11 7L13 9" stroke="#0f7c5f" stroke-width="1.5" fill="none" stroke-dasharray="2 1"/><path d="M3 11V14H6" stroke="#555" stroke-width="0.7" fill="none"/></g></svg>
<div style="position:absolute;left:1160.5px;top:50px;width:15px;height:15px;box-sizing:border-box;border:1px solid #c4c0bb;border-radius:3px;background:linear-gradient(#fdfdfd,#eeedeb);box-shadow:0 1px 0 rgba(255,255,255,0.7);"></div>
<svg style="position:absolute;left:1160.0px;top:49.5px" width="16" height="16" viewBox="0 0 16 16"><g transform="translate(1.6 1.6) scale(0.8)"><rect x="2.5" y="2.5" width="11" height="11" fill="#0f7c5f" stroke="#063a2a" stroke-width="0.7"/><rect x="5" y="9" width="2" height="2" fill="none" stroke="#063a2a" stroke-width="0.5"/></g></svg>
<div class="t" style="left:3px;top:75.03px;font-size:10px;color:#4c4c4c;font-weight:normal;letter-spacing:-0.35px;">Combo View</div>
<svg style="position:absolute;left:209.5px;top:74.5px" width="20" height="9" viewBox="0 0 20 9"><rect x="0.5" y="0.5" width="7.5" height="7.5" rx="1.5" fill="#dcdbd9" stroke="#a09d99" stroke-width="0.9"/><path d="M2.5 2.5h3.5v3.5h-3.5z" fill="#f4f4f4" stroke="#b0b0b0" stroke-width="0.6"/><rect x="11.7" y="0.5" width="7.5" height="7.5" rx="1.5" fill="#dcdbd9" stroke="#a09d99" stroke-width="0.9"/><path d="M13.7 2.5L17.2 6M17.2 2.5L13.7 6" stroke="#444" stroke-width="1.3"/></svg>
<div style="position:absolute;left:2px;top:105px;width:229px;height:558px;box-sizing:border-box;border:1px solid #cdc9c4;border-radius:2px;background:#f6f6f5;"></div>
<div style="position:absolute;left:39px;top:88.5px;width:33px;height:17.5px;box-sizing:border-box;border:1px solid #d0ccc7;border-bottom:none;border-radius:3px 3px 0 0;background:linear-gradient(#f2f1f0,#e4e3e1);"></div>
<div style="position:absolute;left:2px;top:87px;width:37.5px;height:19px;box-sizing:border-box;border:1px solid #cdc9c4;border-bottom:none;border-radius:3px 3px 0 0;background:#f7f7f6;"></div>
<div class="t" style="left:6.5px;top:92.23px;font-size:10px;color:#4c4c4c;font-weight:normal;letter-spacing:0px;">Model</div>
<div class="t" style="left:44.5px;top:93.23px;font-size:10px;color:#4c4c4c;font-weight:normal;letter-spacing:-0.5px;">Tasks</div>
<div style="position:absolute;left:3px;top:106px;width:227px;height:254px;box-sizing:border-box;border:1px solid #d4d1cd;background:#fff;"></div>
<div style="position:absolute;left:4px;top:107px;width:225px;height:16px;background:linear-gradient(#f7f7f6,#efeeec);border-bottom:1px solid #dad7d3;box-sizing:border-box;"></div>
<div style="position:absolute;left:97.5px;top:107px;width:1px;height:16px;background:#dedbd7;"></div>
<div class="t" style="left:6px;top:111.44px;font-size:10px;color:#4c4c4c;font-weight:normal;letter-spacing:0px;">Labels &amp; Attributes</div>
<div class="t" style="left:5.3px;top:125.93px;font-size:10px;color:#4c4c4c;font-weight:normal;letter-spacing:0px;">Application</div>
<svg style="position:absolute;left:8px;top:139px" width="7" height="6" viewBox="0 0 7 6"><path d="M0.8 0.8H5.8L3.3 4.8Z" fill="#555"/></svg>
<svg style="position:absolute;left:19px;top:136.5px" width="9" height="10" viewBox="0 0 9 10"><rect x="0.5" y="0.5" width="8" height="9" fill="#e8e8e8" stroke="#bbb" stroke-width="0.6"/><circle cx="5" cy="3.2" r="2.3" fill="#d02020"/><path d="M2 5.5L4.5 4L7 5.5V8.5L4.5 9.5L2 8.5Z" fill="#2a3ad0"/></svg>
<div class="t" style="left:32.5px;top:138.43px;font-size:10px;color:#3c3c3c;font-weight:bold;letter-spacing:-0.6px;">Unnamed1</div>
<svg style="position:absolute;left:31px;top:147.8px" width="11" height="11" viewBox="0 0 11 11"><rect x="0.8" y="4.3" width="6" height="5.8" rx="0.8" fill="#fff" stroke="#3030ff" stroke-width="1"/><circle cx="6.6" cy="4.3" r="3.4" fill="none" stroke="#3030ff" stroke-width="1"/><path d="M4 7L6.5 5" stroke="#3030ff" stroke-width="0.8"/></svg>
<div class="t" style="left:45.4px;top:151.03px;font-size:10px;color:#4c4c4c;font-weight:normal;letter-spacing:0px;">DWire</div>
<svg style="position:absolute;left:31px;top:160.0px" width="11" height="11" viewBox="0 0 11 11"><rect x="0.8" y="4.3" width="6" height="5.8" rx="0.8" fill="#fff" stroke="#3030ff" stroke-width="1"/><circle cx="6.6" cy="4.3" r="3.4" fill="none" stroke="#3030ff" stroke-width="1"/><path d="M4 7L6.5 5" stroke="#3030ff" stroke-width="0.8"/></svg>
<div class="t" style="left:45.4px;top:163.03px;font-size:10px;color:#3c3c3c;font-weight:bold;letter-spacing:-0.25px;">Rectangle</div>
<svg style="position:absolute;left:112px;top:359.5px" width="8" height="4" viewBox="0 0 8 4"><path d="M1 2h1M3.5 2h1M6 2h1" stroke="#c5c2be" stroke-width="1"/></svg>
<div style="position:absolute;left:3px;top:363px;width:227px;height:280px;box-sizing:border-box;border:1px solid #d4d1cd;background:#fff;"></div>
<div style="position:absolute;left:4px;top:365px;width:224px;height:17px;background:linear-gradient(#f9f9f8,#efeeec);border-bottom:1px solid #d5d2ce;border-top:1px solid #e2dfdb;box-sizing:border-box;"></div>
<div style="position:absolute;left:68.3px;top:366px;width:1px;height:15px;background:#dedbd7;"></div>
<div class="t" style="left:7.3px;top:369.74px;font-size:10px;color:#4c4c4c;font-weight:normal;letter-spacing:0px;">Property</div>
<div class="t" style="left:72px;top:369.74px;font-size:10px;color:#4c4c4c;font-weight:normal;letter-spacing:-0.3px;">Value</div>
<div style="position:absolute;left:227px;top:382px;width:3px;height:260px;background:#e3e0dc;"></div>
<svg style="position:absolute;left:2px;top:641.5px" width="80" height="22" viewBox="0 0 80 22"><path d="M1.5 1L6.5 19.5Q7 20 8 20H26Q27 20 27.5 19.5L32.5 1" fill="#f2f2f1" stroke="#8e8c88" stroke-width="0.9"/><path d="M32.5 1L38 19.5Q38.5 20 39.5 20H57Q58 20 58.5 19.5L63.5 1" fill="#fff" stroke="#8e8c88" stroke-width="0.9"/></svg>
<div style="position:absolute;left:4px;top:642px;width:225px;height:1px;background:#d8d5d1;"></div>
<div class="t" style="left:8px;top:647.24px;font-size:10px;color:#4c4c4c;font-weight:normal;letter-spacing:0px;">View</div>
<div class="t" style="left:40px;top:647.24px;font-size:10px;color:#4c4c4c;font-weight:normal;letter-spacing:0px;">Data</div>
<div style="position:absolute;left:235px;top:642px;width:106px;height:22px;box-sizing:border-box;border:1px solid #cfcbc6;border-top:none;border-radius:0 0 4px 4px;background:linear-gradient(#fafafa,#f4f4f3);"></div>
<svg style="position:absolute;left:238.5px;top:647.5px" width="12" height="10" viewBox="0 0 12 10"><path d="M1 0.8H5V2.5H2.8V4.5H4.5V6H2.8V9.2H1Z" fill="#e8381a"/><circle cx="6.8" cy="5.5" r="3" fill="none" stroke="#1a4ac0" stroke-width="1.8" stroke-dasharray="1.3 0.9"/><circle cx="6.8" cy="5.5" r="2.2" fill="none" stroke="#1a4ac0" stroke-width="1"/></svg>
<div class="t" style="left:254.5px;top:649.44px;font-size:10px;color:#4c4c4c;font-weight:normal;letter-spacing:-0.25px;">Unnamed1 : 1*</div>
<svg style="position:absolute;left:324.5px;top:648px" width="9" height="9" viewBox="0 0 9 9"><path d="M1.5 1.5L7.5 7.5M7.5 1.5L1.5 7.5" stroke="#555" stroke-width="2.2"/></svg>
<div style="position:absolute;left:1px;top:663px;width:1199px;height:1px;background:#dedbd6;"></div>
<div class="t" style="left:1099px;top:670.03px;font-size:10px;color:#4c4c4c;font-weight:normal;letter-spacing:-0.22px;">209.52 x 124.12 mm</div>
<svg style="position:absolute;left:1188px;top:670px" width="12" height="12" viewBox="0 0 12 12"><rect x="10" y="3" width="1" height="1" fill="#d8d5d1"/><rect x="8" y="5" width="1" height="1" fill="#d8d5d1"/><rect x="10" y="5" width="1" height="1" fill="#d8d5d1"/><rect x="6" y="7" width="1" height="1" fill="#d8d5d1"/><rect x="8" y="7" width="1" height="1" fill="#d8d5d1"/><rect x="10" y="7" width="1" height="1" fill="#d8d5d1"/><rect x="4" y="9" width="1" height="1" fill="#d8d5d1"/><rect x="6" y="9" width="1" height="1" fill="#d8d5d1"/><rect x="8" y="9" width="1" height="1" fill="#d8d5d1"/><rect x="10" y="9" width="1" height="1" fill="#d8d5d1"/></svg>
<div style="position:absolute;left:234px;top:69px;width:966px;height:1px;background:#fbfbfa;"></div>
<div style="position:absolute;left:234px;top:69px;width:1px;height:574px;background:#fbfbfa;"></div>
<div style="position:absolute;left:235px;top:70px;width:965px;height:572px;background:linear-gradient(#333365,#9797aa);"></div>
<svg style="position:absolute;left:0;top:0" width="1200" height="682"><polygon points="739,166.7 819,166.7 838.2,186.4 838.2,295 818.7,314.9 739.3,314.9 720,295 720,186.4" fill="#dcdcdc"/><path d="M435.11 129.0V590.0M430.5 133.61H891.5M439.72 129.0V590.0M430.5 138.22H891.5M444.33 129.0V590.0M430.5 142.83H891.5M448.94 129.0V590.0M430.5 147.44H891.5M453.55 129.0V590.0M430.5 152.05H891.5M458.16 129.0V590.0M430.5 156.66H891.5M462.77 129.0V590.0M430.5 161.27H891.5M467.38 129.0V590.0M430.5 165.88H891.5M471.99 129.0V590.0M430.5 170.49H891.5M481.21 129.0V590.0M430.5 179.71H891.5M485.82 129.0V590.0M430.5 184.32H891.5M490.43 129.0V590.0M430.5 188.93H891.5M495.04 129.0V590.0M430.5 193.54H891.5M499.65 129.0V590.0M430.5 198.15H891.5M504.26 129.0V590.0M430.5 202.76H891.5M508.87 129.0V590.0M430.5 207.37H891.5M513.48 129.0V590.0M430.5 211.98H891.5M518.09 129.0V590.0M430.5 216.59H891.5M527.31 129.0V590.0M430.5 225.81H891.5M531.92 129.0V590.0M430.5 230.42H891.5M536.53 129.0V590.0M430.5 235.03H891.5M541.14 129.0V590.0M430.5 239.64H891.5M545.75 129.0V590.0M430.5 244.25H891.5M550.36 129.0V590.0M430.5 248.86H891.5M554.97 129.0V590.0M430.5 253.47H891.5M559.58 129.0V590.0M430.5 258.08H891.5M564.19 129.0V590.0M430.5 262.69H891.5M573.41 129.0V590.0M430.5 271.91H891.5M578.02 129.0V590.0M430.5 276.52H891.5M582.63 129.0V590.0M430.5 281.13H891.5M587.24 129.0V590.0M430.5 285.74H891.5M591.85 129.0V590.0M430.5 290.35H891.5M596.46 129.0V590.0M430.5 294.96H891.5M601.07 129.0V590.0M430.5 299.57H891.5M605.68 129.0V590.0M430.5 304.18H891.5M610.29 129.0V590.0M430.5 308.79H891.5M619.51 129.0V590.0M430.5 318.01H891.5M624.12 129.0V590.0M430.5 322.62H891.5M628.73 129.0V590.0M430.5 327.23H891.5M633.34 129.0V590.0M430.5 331.84H891.5M637.95 129.0V590.0M430.5 336.45H891.5M642.56 129.0V590.0M430.5 341.06H891.5M647.17 129.0V590.0M430.5 345.67H891.5M651.78 129.0V590.0M430.5 350.28H891.5M656.39 129.0V590.0M430.5 354.89H891.5M665.61 129.0V590.0M430.5 364.11H891.5M670.22 129.0V590.0M430.5 368.72H891.5M674.83 129.0V590.0M430.5 373.33H891.5M679.44 129.0V590.0M430.5 377.94H891.5M684.05 129.0V590.0M430.5 382.55H891.5M688.66 129.0V590.0M430.5 387.16H891.5M693.27 129.0V590.0M430.5 391.77H891.5M697.88 129.0V590.0M430.5 396.38H891.5M702.49 129.0V590.0M430.5 400.99H891.5M711.71 129.0V590.0M430.5 410.21H891.5M716.32 129.0V590.0M430.5 414.82H891.5M720.93 129.0V590.0M430.5 419.43H891.5M725.54 129.0V590.0M430.5 424.04H891.5M730.15 129.0V590.0M430.5 428.65H891.5M734.76 129.0V590.0M430.5 433.26H891.5M739.37 129.0V590.0M430.5 437.87H891.5M743.98 129.0V590.0M430.5 442.48H891.5M748.59 129.0V590.0M430.5 447.09H891.5M757.81 129.0V590.0M430.5 456.31H891.5M762.42 129.0V590.0M430.5 460.92H891.5M767.03 129.0V590.0M430.5 465.53H891.5M771.64 129.0V590.0M430.5 470.14H891.5M776.25 129.0V590.0M430.5 474.75H891.5M780.86 129.0V590.0M430.5 479.36H891.5M785.47 129.0V590.0M430.5 483.97H891.5M790.08 129.0V590.0M430.5 488.58H891.5M794.69 129.0V590.0M430.5 493.19H891.5M803.91 129.0V590.0M430.5 502.41H891.5M808.52 129.0V590.0M430.5 507.02H891.5M813.13 129.0V590.0M430.5 511.63H891.5M817.74 129.0V590.0M430.5 516.24H891.5M822.35 129.0V590.0M430.5 520.85H891.5M826.96 129.0V590.0M430.5 525.46H891.5M831.57 129.0V590.0M430.5 530.07H891.5M836.18 129.0V590.0M430.5 534.68H891.5M840.79 129.0V590.0M430.5 539.29H891.5M850.01 129.0V590.0M430.5 548.51H891.5M854.62 129.0V590.0M430.5 553.12H891.5M859.23 129.0V590.0M430.5 557.73H891.5M863.84 129.0V590.0M430.5 562.34H891.5M868.45 129.0V590.0M430.5 566.95H891.5M873.06 129.0V590.0M430.5 571.56H891.5M877.67 129.0V590.0M430.5 576.17H891.5M882.28 129.0V590.0M430.5 580.78H891.5M886.89 129.0V590.0M430.5 585.39H891.5" stroke="rgb(50,50,75)" stroke-opacity="0.19" stroke-width="1" fill="none"/><path d="M430.50 129.0V590.0M430.5 129.00H891.5M476.60 129.0V590.0M430.5 175.10H891.5M522.70 129.0V590.0M430.5 221.20H891.5M568.80 129.0V590.0M430.5 267.30H891.5M614.90 129.0V590.0M430.5 313.40H891.5M661.00 129.0V590.0M707.10 129.0V590.0M430.5 405.60H891.5M753.20 129.0V590.0M430.5 451.70H891.5M799.30 129.0V590.0M430.5 497.80H891.5M845.40 129.0V590.0M430.5 543.90H891.5M891.50 129.0V590.0M430.5 590.00H891.5" stroke="rgb(40,40,62)" stroke-opacity="0.45" stroke-width="1" fill="none"/><path d="M430.5 359.50H891.5" stroke="rgb(30,30,55)" stroke-opacity="0.6" stroke-width="1.2" fill="none"/><polygon points="739,166.7 819,166.7 838.2,186.4 838.2,295 818.7,314.9 739.3,314.9 720,295 720,186.4" fill="none" stroke="#111118" stroke-width="1.5"/><polyline points="476.7,272.2 476.7,174 489.7,161 569.5,161 582.6,174 582.6,254.1 595.5,267.2 619.4,267.2 635.8,274.1 660.1,298.3" fill="none" stroke="#16161f" stroke-width="1.35" stroke-linejoin="miter"/><path d="M1171.5 613.2V600" stroke="#1f9a1f" stroke-width="1.6"/><path d="M1169 600.5L1171.5 594L1174 600.5Z" fill="#1f9a1f"/><path d="M1171.5 613.2H1185" stroke="#b02020" stroke-width="1.6"/><path d="M1184.5 610.7L1191 613.2L1184.5 615.7Z" fill="#b02020"/><path d="M1171.5 610.5L1174.2 613.2L1171.5 615.9L1168.8 613.2Z" fill="#2020a0"/><text x="1173.5" y="594.5" font-family="Liberation Sans" font-size="6" fill="#222">Y</text><text x="1191.8" y="615" font-family="Liberation Sans" font-size="6" fill="#222">X</text><text x="1173" y="612.5" font-family="Liberation Sans" font-size="6" fill="#222">Z</text></svg>
</body></html>
